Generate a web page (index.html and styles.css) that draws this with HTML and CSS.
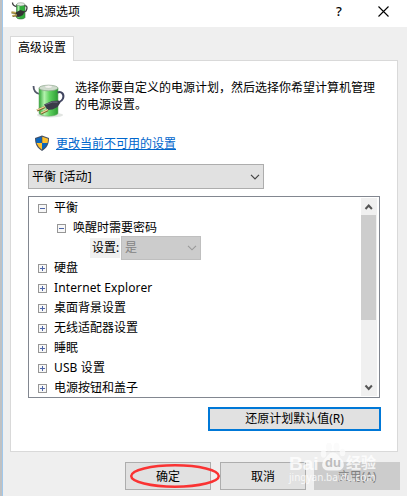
FILE: index.html
```html
<!DOCTYPE html>
<html lang="zh-CN">
<head>
    <meta charset="UTF-8">
    <meta name="viewport" content="width=device-width, initial-scale=1.0">
    <title>电源选项</title>
    <link rel="stylesheet" href="styles.css">
</head>
<body>

    <div class="window">
        <div class="titlebar">
            <svg class="title-icon" width="17" height="18" viewBox="0 0 17 18">
                <path d="M5.500 2.500v13c1 2 7.500 2 8.500 0v-13z" fill="#2fae3a" stroke="#3f6a45" stroke-width=".6"/>
                <path d="M7.500 3.500v12" stroke="#a5eba5" stroke-width="2"/>
                <ellipse cx="9.800" cy="2.300" rx="4" ry="1.600" fill="#e4ece4" stroke="#6c806e" stroke-width=".5"/>
                <path d="M1.500 .5c0 2 1.500 3.500 4 4M13.500 4c3-1 3 3 1.500 5l-3 1.500" fill="none" stroke="#3c3c3c" stroke-width="1.300"/>
                <path d="M4.500 10.500l5-2.500 4 1.500-1.500 3.500-4 2-3.500-.5z" fill="#333"/>
                <path d="M.5 10.500l4.500.5M1.500 14l4.500-.7" stroke="#7d6824" stroke-width="1.800"/>
                <path d="M.5 10l4.500.5M1.500 13.500l4.500-.7" stroke="#dfc66a" stroke-width=".8"/>
            </svg>
            <span class="title">电源选项</span>
            <span class="help">?</span>
            <svg class="close" width="11" height="11" viewBox="0 0 11 11">
                <path d="M.5.5l10 10M10.500.5l-10 10" stroke="#000" stroke-width="1.100"/>
            </svg>
        </div>

        <div class="content">
            <div class="tab">高级设置</div>

            <div class="panel">
                <div class="intro">
                    <svg class="battery" width="34" height="36" viewBox="0 0 34 36">
                        <defs>
                            <linearGradient id="green">
                                <stop offset="0" stop-color="#2fa636"/>
                                <stop offset=".28" stop-color="#b4f2ae"/>
                                <stop offset=".55" stop-color="#5fd25f"/>
                                <stop offset="1" stop-color="#2c9c33"/>
                            </linearGradient>
                        </defs>
                        <ellipse cx="18" cy="31" rx="13" ry="2.500" fill="#e2e5e2"/>
                        <path d="M1.500 2c0 5 2 7 6 8" fill="none" stroke="#53586a" stroke-width="1.800"/>
                        <path d="M7 4v25.500c2 3.500 17 3.500 19 0V4z" fill="url(#green)" stroke="#74ae74" stroke-width=".6"/>
                        <ellipse cx="16.500" cy="4" rx="9.500" ry="2.800" fill="#cfdccd" stroke="#8aa38a" stroke-width=".7"/>
                        <ellipse cx="16.500" cy="2.800" rx="3.800" ry="1.500" fill="#f4f4f0" stroke="#aab5a8" stroke-width=".4"/>
                        <path d="M25.500 8.500c4-2 7 2 5.500 6-1 2.500-2.500 3-4.500 4" fill="none" stroke="#414560" stroke-width="2"/>
                        <path d="M12 20.500l8-3.500 6.500-.5 2 2-3 4.500-5 2.500-5 .5z" fill="#3a3b48"/>
                        <path d="M13.500 20.500l7-2.500 5 .2" fill="none" stroke="#7c7e90" stroke-width=".8"/>
                        <path d="M5 26.500l8-3.500M9 29.500l7-3.500" stroke="#7d632b" stroke-width="2.400"/>
                        <path d="M5 26l8-3.500M9 29l7-3.500" stroke="#f0dba0" stroke-width="1.100"/>
                    </svg>
                    <p>选择你要自定义的电源计划，然后选择你希望计算机管理<br>的电源设置。</p>
                </div>

                <div class="admin">
                    <svg width="14" height="16" viewBox="0 0 14 16">
                        <path d="M7 .5L14 3c0 6-2 10-7 13C2 13 0 9 0 3z" fill="#465064"/>
                        <path d="M6.500 1.700V8H1.500Q1 6 1 3.700z" fill="#0b65bb"/>
                        <path d="M7.300 1.700L13 3.700Q13 6 12.500 8H7.300z" fill="#ffc02c"/>
                        <path d="M1.500 8H7v6.700Q3 12 1.500 8z" fill="#ffc02c"/>
                        <path d="M7 8h5.500Q11 12 7 14.700z" fill="#0b65bb"/>
                    </svg>
                    <a class="link" href="#">更改当前不可用的设置</a>
                </div>

                <div class="select plan">
                    <span>平衡 [活动]</span>
                    <svg width="10" height="6" viewBox="0 0 10 6"><path d="M1 .8l4 4 4-4" fill="none" stroke="#444" stroke-width="1.200"/></svg>
                </div>

                <div class="list">
                    <div class="tree">
                        <div class="row"><i class="box"></i><span>平衡</span></div>
                        <div class="row child"><i class="box"></i><span>唤醒时需要密码</span></div>
                        <div class="row setting">
                            <span class="label">设置:</span>
                            <div class="select disabled">
                                <span>是</span>
                                <svg width="10" height="6" viewBox="0 0 10 6"><path d="M1 .8l4 4 4-4" fill="none" stroke="#999" stroke-width="1.100"/></svg>
                            </div>
                        </div>
                        <div class="row"><i class="box plus"></i><span>硬盘</span></div>
                        <div class="row"><i class="box plus"></i><span class="latin">Internet Explorer</span></div>
                        <div class="row"><i class="box plus"></i><span>桌面背景设置</span></div>
                        <div class="row"><i class="box plus"></i><span>无线适配器设置</span></div>
                        <div class="row"><i class="box plus"></i><span>睡眠</span></div>
                        <div class="row"><i class="box plus"></i><span class="latin">USB 设置</span></div>
                        <div class="row"><i class="box plus"></i><span>电源按钮和盖子</span></div>
                    </div>
                    <div class="scrollbar">
                        <svg width="16" height="17" viewBox="0 0 16 17"><path d="M4.500 11l3.200-3.500 3.200 3.500" fill="none" stroke="#555" stroke-width="2"/></svg>
                        <div class="thumb"></div>
                        <svg width="16" height="17" viewBox="0 0 16 17"><path d="M4.500 6.500l3.200 3.500 3.200-3.500" fill="none" stroke="#555" stroke-width="2"/></svg>
                    </div>
                </div>

                <button class="restore">还原计划默认值(R)</button>
            </div>

            <div class="buttons">
                <button class="ok">确定
                    <svg class="ring" width="92" height="26" viewBox="0 0 92 26"><ellipse cx="46" cy="13" rx="43.800" ry="10.700" fill="none" stroke="#fa3333" stroke-width="2.500"/></svg>
                </button>
                <button>取消</button>
                <button class="apply" disabled>应用(A)</button>
            </div>
        </div>
    </div>

    <div class="watermark">
        <svg class="paw" width="26" height="29" viewBox="0 0 26 29">
            <ellipse cx="3.500" cy="12" rx="2.800" ry="3.700"/>
            <ellipse cx="9" cy="5" rx="3" ry="4.300"/>
            <ellipse cx="16.500" cy="5" rx="3" ry="4.300"/>
            <ellipse cx="22.500" cy="10.500" rx="2.800" ry="3.700"/>
            <path d="M13 10.500c4 0 5 3 8 6 5 5 3 12-3 12H8c-6 0-8-7-3-12 3-3 4-6 8-6z"/>
        </svg>
        <span class="bai">Bai</span>
        <span class="du">du</span>
        <span class="jingyan">经验</span>
        <span class="site">jingyan.baidu.com</span>
    </div>

</body>
</html>
```
FILE: styles.css
```css
* {
    box-sizing: border-box;
}
body {
    position: relative;
    margin: 0;
    width: 407px;
    height: 496px;
    overflow: hidden;
    padding-left: 2px;
    background-color: #bfc1c3;
    font-family: "Noto Sans", "Noto Sans CJK SC", sans-serif;
    font-size: 12px;
    color: #000;
}
.window {
    height: 496px;
    border-left: 1px solid #a0c8ec;
    background-color: #efefef;
}
.titlebar {
    display: flex;
    align-items: center;
    height: 27px;
    padding: 0 18px 4px 8px;
    background-color: #fff;
}
.title-icon {
    margin-top: -1px;
}
.title {
    flex: 1;
    margin-top: -1px;
    margin-left: 4px;
}
.help {
    width: 8px;
    margin-right: 34px;
    margin-top: -1px;
    font-size: 13px;
    font-weight: 500;
}
.content {
    padding: 9px 7px 0;
}
.tab {
    position: relative;
    width: 64px;
    height: 25px;
    border: 1px solid #d9d9d9;
    border-bottom: none;
    background-color: #fff;
    line-height: 22px;
    padding-left: 7px;
    white-space: nowrap;
}
.panel {
    display: flex;
    flex-direction: column;
    width: 388px;
    height: 392px;
    margin-top: -1px;
    padding: 18px 16px 0 17px;
    border: 1px solid #d9d9d9;
    background-color: #fff;
}
.intro {
    display: flex;
    height: 56px;
}
.battery {
    margin: 5px 0 0 4px;
}
.intro p {
    margin: 0 0 0 9px;
    line-height: 17px;
    white-space: nowrap;
}
.admin {
    display: flex;
    align-items: flex-start;
    height: 29px;
    padding-left: 7px;
}
.link {
    margin-left: 7px;
    line-height: 18px;
    color: #0066cc;
}
.select {
    display: flex;
    align-items: center;
    justify-content: space-between;
    border: 1px solid #adadad;
    background-color: #e1e1e1;
    padding: 0 3px;
}
.select span {
    margin-top: -1px;
}
.plan {
    width: 236px;
    height: 25px;
    letter-spacing: 0.1px;
}
.list {
    display: flex;
    width: 352px;
    height: 202px;
    margin-top: 7px;
    padding: 1px;
    border: 1px solid #828790;
}
.tree {
    flex: 1;
    overflow: hidden;
}
.row {
    display: flex;
    align-items: center;
    height: 20px;
    padding-left: 8px;
    white-space: nowrap;
}
.row span {
    margin-top: -2px;
}
.latin {
    letter-spacing: 0.12px;
}
.child {
    padding-left: 27px;
}
.setting {
    padding-left: 60px;
}
.setting .label {
    width: 30px;
    height: 20px;
    margin-top: 0;
    padding-left: 2px;
    line-height: 19px;
    background-color: #f0f0f0;
}
.disabled {
    width: 80px;
    height: 24px;
    margin: -2px 0 -2px 1px;
    border-color: #bfbfbf;
    background-color: #ccc;
    color: #838383;
}
.box {
    width: 9px;
    height: 9px;
    margin-right: 7px;
    border: 1px solid #969696;
    background: linear-gradient(#4b63a7, #4b63a7) center / 5px 1px no-repeat, #f7f7f7;
}
.plus {
    background: linear-gradient(#4b63a7, #4b63a7) center / 5px 1px no-repeat, linear-gradient(#4b63a7, #4b63a7) center / 1px 5px no-repeat, #f7f7f7;
}
.scrollbar {
    display: flex;
    flex-direction: column;
    justify-content: space-between;
    width: 16px;
    margin-right: 1px;
    background-color: #f0f0f0;
}
.thumb {
    width: 15px;
    height: 105px;
    margin-bottom: auto;
    background-color: #cdcdcd;
}
button {
    width: 86px;
    height: 28px;
    padding: 0;
    border: 1px solid #adadad;
    background-color: #e1e1e1;
    color: #000;
    font: inherit;
}
.restore {
    align-self: flex-end;
    width: 173px;
    height: 24px;
    margin-top: 9px;
    border: 2px solid #0078d7;
    line-height: 18px;
}
.buttons {
    display: flex;
    gap: 9px;
    margin: 10px 0 0 115px;
}
.ok {
    position: relative;
}
.ring {
    position: absolute;
    left: 3px;
    top: 0;
}
.apply {
    border-color: #ccc;
    background-color: #ccc;
    color: #808080;
    margin-left: -1px;
}
/* marca de agua sobre los botones */
.watermark {
    position: absolute;
    left: 289px;
    top: 441px;
    width: 92px;
    height: 46px;
    color: rgba(255, 255, 255, 0.8);
    line-height: 1;
    white-space: nowrap;
}
.watermark span,
.paw {
    position: absolute;
}
.paw {
    left: 31px;
    top: 1px;
    fill: #fbfbfb;
    opacity: 0.85;
}
.bai {
    left: 0;
    top: 13px;
    font: bold 19px/19px "Liberation Sans", Arial, sans-serif;
}
.watermark .du {
    left: 36px;
    top: 13px;
    color: #bdbdbd;
    font: bold 13px/17px "Liberation Sans", Arial, sans-serif;
}
.jingyan {
    left: 57px;
    top: 14px;
    font-size: 15px;
    font-weight: bold;
}
.site {
    left: 0;
    top: 31px;
    font-size: 10px;
}
```
